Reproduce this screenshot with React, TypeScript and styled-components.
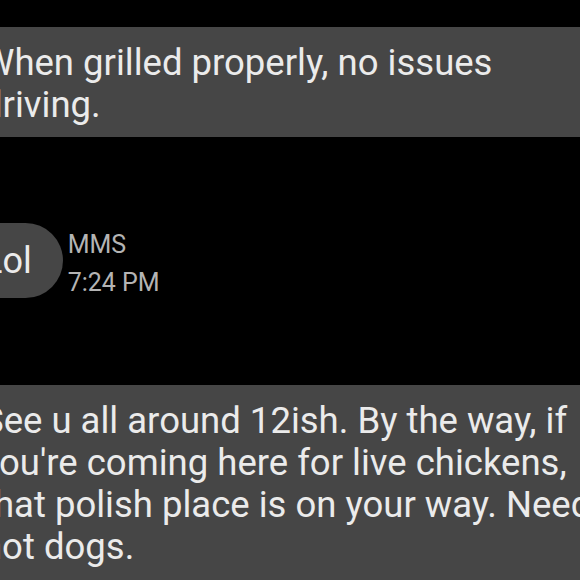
import styled, { createGlobalStyle } from "styled-components";

const GlobalStyle = createGlobalStyle`
  html, body {
    margin: 0;
    padding: 0;
    background: #000;
  }
`;

const Screen = styled.div`
  width: 580px;
  height: 580px;
  overflow: hidden;
  background: #000;
  font-family: Roboto, "Noto Sans", "Liberation Sans", sans-serif;
`;

// the crop cuts into the left edge of the thread
const Thread = styled.div`
  margin-left: -40px;
  width: 680px;
  padding-top: 27px;
  display: flex;
  flex-direction: column;
`;

const Bubble = styled.div<{ $top?: number }>`
  margin-top: ${(p) => p.$top ?? 0}px;
  padding: 15px 40px 20px 22px;
  background: #464646;
  color: #ebebeb;
  font-size: 36.5px;
  line-height: 42px;

  &:first-child {
    padding-bottom: 11px;
  }
`;

const Row = styled.div`
  margin-top: 86px;
  display: flex;
  align-items: flex-start;
  gap: 5px;
`;

const Pill = styled.div`
  height: 75px;
  box-sizing: border-box;
  padding: 17px 31px 0 23px;
  border-radius: 38px;
  background: #464646;
  color: #ebebeb;
  font-size: 36px;
  line-height: 42px;
`;

const Meta = styled.div`
  margin-top: 3px;
  display: flex;
  flex-direction: column;
  color: #b4b4b4;
  font-size: 25px;
  line-height: 38px;
`;

export default function App() {
  return (
    <>
      <GlobalStyle />
      <Screen>
        <Thread>
          <Bubble>
            When grilled properly, no issues
            <br />
            driving.
          </Bubble>
          <Row>
            <Pill>Lol</Pill>
            <Meta>
              <span>MMS</span>
              <span>7:24 PM</span>
            </Meta>
          </Row>
          <Bubble $top={83}>
            See u all around 12ish. By the way, if
            <br />
            you're coming here for live chickens,
            <br />
            that polish place is on your way. Need
            <br />
            hot dogs.
          </Bubble>
        </Thread>
      </Screen>
    </>
  );
}
